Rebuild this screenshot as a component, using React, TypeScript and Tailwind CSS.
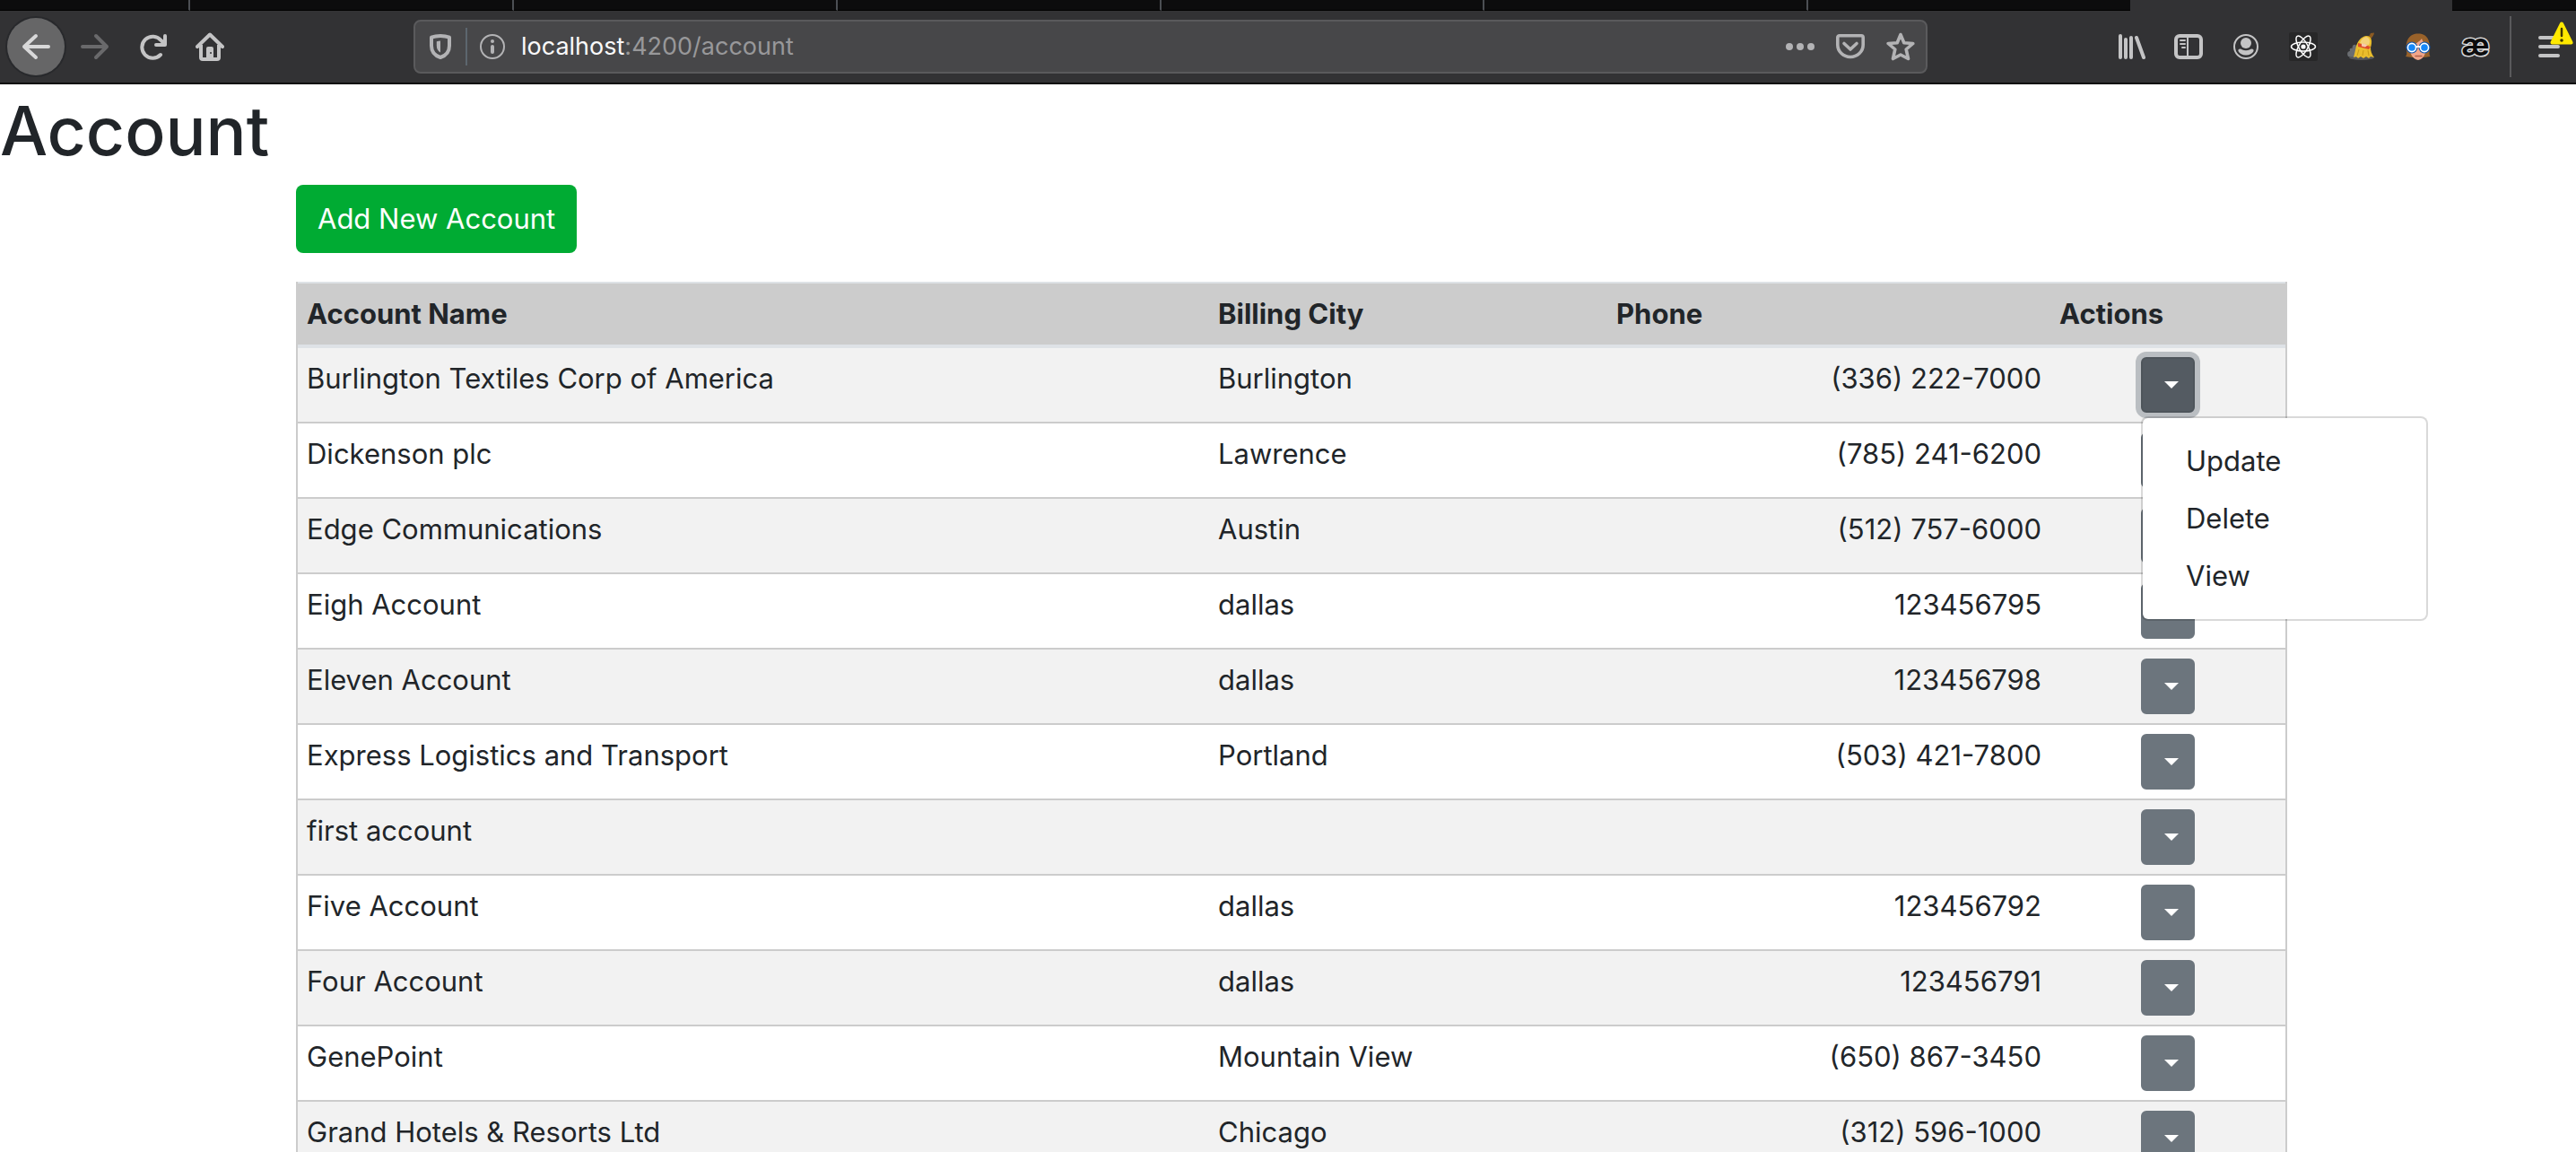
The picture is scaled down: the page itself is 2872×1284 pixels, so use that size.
import type { ReactNode } from "react";

type Account = { name: string; city: string; phone: string };

const accounts: Account[] = [
  { name: "Burlington Textiles Corp of America", city: "Burlington", phone: "(336) 222-7000" },
  { name: "Dickenson plc", city: "Lawrence", phone: "(785) 241-6200" },
  { name: "Edge Communications", city: "Austin", phone: "(512) 757-6000" },
  { name: "Eigh Account", city: "dallas", phone: "123456795" },
  { name: "Eleven Account", city: "dallas", phone: "123456798" },
  { name: "Express Logistics and Transport", city: "Portland", phone: "(503) 421-7800" },
  { name: "first account", city: "", phone: "" },
  { name: "Five Account", city: "dallas", phone: "123456792" },
  { name: "Four Account", city: "dallas", phone: "123456791" },
  { name: "GenePoint", city: "Mountain View", phone: "(650) 867-3450" },
  { name: "Grand Hotels & Resorts Ltd", city: "Chicago", phone: "(312) 596-1000" },
];

function Icon({ children, className = "" }: { children: ReactNode; className?: string }) {
  return (
    <svg viewBox="0 0 32 32" className={"size-8 shrink-0 " + className} fill="none" aria-hidden="true">
      {children}
    </svg>
  );
}

function ToolButton({ label, children }: { label: string; children: ReactNode }) {
  return (
    <button type="button" aria-label={label} className="flex h-16 w-16 shrink-0 items-center justify-center text-[#c4c4c5]">
      {children}
    </button>
  );
}

function TabStrip() {
  return (
    <div className="flex h-3 bg-[#323234]">
      <div className="w-[212px] shrink-0 border-r-2 border-b border-r-[#4c4f54] border-b-black bg-[#0c0c0d]" />
      <div className="flex-1 border-r-2 border-b border-r-[#4c4f54] border-b-black bg-[#0c0c0d]" />
      <div className="flex-1 border-r-2 border-b border-r-[#4c4f54] border-b-black bg-[#0c0c0d]" />
      <div className="flex-1 border-r-2 border-b border-r-[#4c4f54] border-b-black bg-[#0c0c0d]" />
      <div className="flex-1 border-r-2 border-b border-r-[#4c4f54] border-b-black bg-[#0c0c0d]" />
      <div className="flex-1 border-r-2 border-b border-r-[#4c4f54] border-b-black bg-[#0c0c0d]" />
      <div className="flex-1 border-b border-black bg-[#0c0c0d]" />
      <div className="flex-1" />
      <div className="w-[138px] shrink-0 border-b border-black bg-[#0c0c0d]" />
    </div>
  );
}

function UrlBar() {
  return (
    <div className="flex h-[60px] min-w-0 flex-1 items-center rounded-lg border-2 border-[#5a5a5c] bg-[#474749] text-[#b3b3b5]">
      <Icon className="ml-3">
        <path d="M16 4c4 0 7.500.7 10 1.700V15c0 6.500-3.800 11-10 13-6.200-2-10-6.500-10-13V5.700C8.500 4.700 12 4 16 4z" stroke="currentColor" strokeWidth="4" strokeLinejoin="round" />
        <path d="M16 9.500c-1.600 0-3 .3-4.200.7V15c0 3.800 1.600 6 4.200 7.500z" fill="currentColor" />
      </Icon>
      <div className="ml-3 h-[42px] w-0.5 bg-[#5c666e]" />
      <Icon className="ml-3">
        <circle cx="16" cy="16" r="13" stroke="currentColor" strokeWidth="2" />
        <circle cx="16" cy="10" r="2" fill="currentColor" />
        <path d="M16 16v6" stroke="currentColor" strokeWidth="4" strokeLinecap="round" />
      </Icon>
      <div className="ml-4 min-w-0 flex-1 truncate text-[27px] text-[#98989a]">
        <span className="text-[#f9f9fa]">localhost</span>:4200/account
      </div>
      <button type="button" aria-label="Page actions" className="mr-6">
        <Icon>
          <circle cx="4" cy="16" r="4" fill="currentColor" />
          <circle cx="16" cy="16" r="4" fill="currentColor" />
          <circle cx="28" cy="16" r="4" fill="currentColor" />
        </Icon>
      </button>
      <button type="button" aria-label="Save to Pocket" className="mr-6">
        <Icon>
          <path d="M3.800 3.800h24.400a2 2 0 0 1 2 2V14a14.200 13.500 0 0 1-28.400 0V5.800a2 2 0 0 1 2-2z" stroke="currentColor" strokeWidth="3.600" strokeLinejoin="round" />
          <path d="M9 12.500l7 6.500 7-6.500" stroke="currentColor" strokeWidth="3.600" strokeLinecap="round" strokeLinejoin="round" />
        </Icon>
      </button>
      <button type="button" aria-label="Bookmark this page" className="mr-3">
        <Icon>
          <path d="M16 2.500l3.800 9.200 10 .8-7.600 6.500 2.300 10.500L16 25l-8.500 4.500L9.800 19 2.200 12.500l10-.8z" stroke="currentColor" strokeWidth="3.600" strokeLinejoin="round" />
        </Icon>
      </button>
    </div>
  );
}

function BrowserBar() {
  return (
    <header className="text-[#c4c4c5]">
      <TabStrip />
      <div className="flex h-[82px] items-center border-b-2 border-[#0c0c0d] bg-[#323234]">
        <button type="button" aria-label="Back" className="ml-2 flex size-16 shrink-0 items-center justify-center rounded-full bg-[#666667] text-[#d8d8d9] ring-2 ring-[#28292c]">
          <Icon>
            <path d="M30 16H3M16 4L3 16l13 12" stroke="currentColor" strokeWidth="4" strokeLinecap="round" strokeLinejoin="round" />
          </Icon>
        </button>
        <button type="button" aria-label="Forward" className="ml-[18px] shrink-0 text-[#69696b]">
          <Icon>
            <path d="M2 16h27M17 4l12 12-12 12" stroke="currentColor" strokeWidth="4" strokeLinecap="round" strokeLinejoin="round" />
          </Icon>
        </button>
        <button type="button" aria-label="Reload" className="ml-8 shrink-0">
          <Icon>
            <path d="M25 25A12 12 0 1 1 25.500 9l4 4" stroke="currentColor" strokeWidth="4" strokeLinecap="round" />
            <path d="M30 4v10H20" stroke="currentColor" strokeWidth="4" strokeLinecap="round" strokeLinejoin="round" />
          </Icon>
        </button>
        <button type="button" aria-label="Home" className="ml-8 shrink-0">
          <Icon>
            <path d="M2 16L16 2.500 30 16" stroke="currentColor" strokeWidth="4" strokeLinecap="round" strokeLinejoin="round" />
            <path d="M6 14v14a2 2 0 0 0 2 2h16a2 2 0 0 0 2-2V14" stroke="currentColor" strokeWidth="4" />
            <path d="M12 30V18a2 2 0 0 1 2-2h4a2 2 0 0 1 2 2v12z" fill="currentColor" />
            <circle cx="17" cy="23" r="1" fill="#323234" />
          </Icon>
        </button>
        <div className="mr-[195px] ml-[211px] flex min-w-0 flex-1">
          <UrlBar />
        </div>
        <ToolButton label="Library">
          <Icon>
            <path d="M4 4v24M10 8v20M16 6v22M22 6l8 22" stroke="currentColor" strokeWidth="4" strokeLinecap="round" />
          </Icon>
        </ToolButton>
        <ToolButton label="Sidebars">
          <Icon>
            <rect x="2" y="4" width="28" height="24" rx="4" stroke="currentColor" strokeWidth="4" />
            <path d="M15 4v24" stroke="currentColor" strokeWidth="2" />
            <path d="M7 9h5M7 13h5M9 17h3" stroke="currentColor" strokeWidth="2" strokeLinecap="round" />
          </Icon>
        </ToolButton>
        <ToolButton label="Firefox account">
          <Icon>
            <circle cx="16" cy="16" r="13" stroke="currentColor" strokeWidth="2" />
            <circle cx="16" cy="12" r="6" fill="currentColor" />
            <path d="M9.500 18.500c1.500 0 3.200 1.800 6.500 1.800s5-1.800 6.500-1.800c1.800 0 2.500 1.400 1.900 2.800C23 24 20 25.500 16 25.500S9 24 7.600 21.300c-.6-1.400.1-2.800 1.900-2.800z" fill="currentColor" />
          </Icon>
        </ToolButton>
        <ToolButton label="React Developer Tools">
          <Icon>
            <rect width="32" height="32" rx="2" fill="#272728" />
            <g stroke="#fff" strokeWidth="1.500">
              <ellipse cx="16" cy="16" rx="13.500" ry="5" />
              <ellipse cx="16" cy="16" rx="13.500" ry="5" transform="rotate(60 16 16)" />
              <ellipse cx="16" cy="16" rx="13.500" ry="5" transform="rotate(120 16 16)" />
            </g>
            <circle cx="16" cy="16" r="2.600" fill="#fff" />
          </Icon>
        </ToolButton>
        <ToolButton label="Cleaner">
          <Icon>
            <ellipse cx="17" cy="28" rx="14" ry="3" fill="#55575a" />
            <path d="M2 27c-2-4 0-6 2-6-1-3 1-4 2.500-3 0-4 2-5 4-4l3 14z" fill="#6a6d71" />
            <path d="M22 5c2 0 4-1 5-4l4-.5c0 2-2 5-4 7z" fill="#8a5a22" />
            <path d="M22 4c-6 1-9 6-11 11-1 5-2 9-3 13l3-1 2 2 3-2 3 2 3-2 3 2 2-2 4 1c-3-4-4-7-4-11 2-6 2-13-5-13z" fill="#e9bd2c" />
            <path d="M22 5c-4 1-6 4-7 7l10 2c2-4 1-8-3-9z" fill="#f3d27a" />
            <path d="M13 12l14 4-2 3-12-3z" fill="#dd4a2b" />
            <path d="M17 12l7 2-3 2.500-4-1z" fill="#f7c9ad" />
            <path d="M14 19l-2 7M19 20l-1 6M24 20l1 6" stroke="#c99a16" />
          </Icon>
        </ToolButton>
        <ToolButton label="Profile helper">
          <Icon>
            <path d="M2 27c3-3 0-8 1-15C5 4 10 1.500 16 1.500S27 4 28.500 12c.8 7-1 12 1 15l-7 1H9z" fill="#99622a" />
            <path d="M7 15c5-1 11-5 13-8 1 4 4 6 5 8 0 7-2 15-9 16-7-1-10-9-9-16z" fill="#f2a68a" />
            <path d="M13 26.500h7" stroke="#b0604a" strokeWidth="1.500" strokeLinecap="round" />
            <circle cx="9" cy="17" r="6.500" fill="#0a55b0" />
            <circle cx="23" cy="17" r="6.500" fill="#0a55b0" />
            <circle cx="9" cy="17" r="4.600" fill="#1688fa" stroke="#fff" strokeWidth="1.600" />
            <circle cx="23" cy="17" r="4.600" fill="#1688fa" stroke="#fff" strokeWidth="1.600" />
            <path d="M13.500 16.500q2.500-1.500 5 0" stroke="#fff" strokeWidth="1.800" />
          </Icon>
        </ToolButton>
        <ToolButton label="Spelling">
          <svg viewBox="0 0 32 32" className="size-8 shrink-0 overflow-visible" aria-hidden="true">
            <text x="16" y="26" textAnchor="middle" className="font-[Inter] text-[34px] font-bold" fill="#0c0c0d" stroke="#d8d8d8" strokeWidth="3" strokeLinejoin="round" paintOrder="stroke">
              æ
            </text>
          </svg>
        </ToolButton>
        <div className="ml-1.5 h-[68px] w-0.5 shrink-0 bg-[#5a5a5c]" />
        <button type="button" aria-label="Open menu" className="relative mr-3.5 ml-[26px] shrink-0">
          <Icon>
            <path d="M6 6h20M6 16h20M6 26h20" stroke="currentColor" strokeWidth="4" strokeLinecap="round" />
          </Icon>
          <svg viewBox="0 0 26 26" className="absolute -top-3 left-[17px] size-[26px]" aria-hidden="true">
            <path d="M13 2.500L23.500 23.500h-21z" fill="#ffe900" stroke="#ffe900" strokeWidth="4" strokeLinejoin="round" />
            <path d="M13 8v8" stroke="#3e3800" strokeWidth="2.500" strokeLinecap="round" />
            <circle cx="13" cy="21" r="1.800" fill="#3e3800" />
          </svg>
        </button>
      </div>
    </header>
  );
}

function Caret() {
  return <span className="ml-2 block border-x-8 border-t-8 border-x-transparent border-t-white" />;
}

function ActionsMenu() {
  return (
    <div
      role="menu"
      className="absolute top-full left-0 z-10 mt-1 flex w-80 flex-col rounded-lg border-2 border-black/15 bg-white bg-clip-padding py-4 text-left"
    >
      {["Update", "Delete", "View"].map((item) => (
        <a key={item} href="#" role="menuitem" className="px-12 py-2">
          {item}
        </a>
      ))}
    </div>
  );
}

function ActionsCell({ name, open }: { name: string; open: boolean }) {
  return (
    <div className="relative mx-auto w-[60px]">
      <button
        type="button"
        aria-label={"Actions for " + name}
        aria-haspopup="menu"
        aria-expanded={open}
        className={
          "flex h-[62px] w-[60px] items-center justify-center rounded-md border-2 " +
          (open ? "border-[#4e555b] bg-[#545b62] ring-6 ring-[#828a91]/50" : "border-[#6c757d] bg-[#6c757d]")
        }
      >
        <Caret />
      </button>
      {open && <ActionsMenu />}
    </div>
  );
}

export default function App() {
  return (
    <div className="h-screen overflow-hidden bg-white font-[Inter,sans-serif] text-[31px] leading-12 text-[#212529]">
      <BrowserBar />
      <main>
        <h1 className="mb-3 pt-1 text-[75px] leading-24 font-medium">Account</h1>
        <div className="pl-2">
          <div className="mx-auto max-w-[2220px]">
            <button type="button" className="mb-8 block h-[76px] rounded-lg bg-[#00ab33] px-6 text-white">
              Add New Account
            </button>
            <table className="w-full table-fixed border-separate border-spacing-0 border-x-2 border-[#ccc]">
              <thead className="bg-[#ccc] text-left">
                <tr>
                  <th scope="col" className="border-t-2 border-b-4 border-[#dee2e6] p-2.5 font-bold">Account Name</th>
                  <th scope="col" className="w-[444px] border-t-2 border-b-4 border-[#dee2e6] p-2.5 font-bold">Billing City</th>
                  <th scope="col" className="w-[494px] border-t-2 border-b-4 border-[#dee2e6] p-2.5 font-bold">Phone</th>
                  <th scope="col" className="w-[262px] border-t-2 border-b-4 border-[#dee2e6] p-2.5 font-bold">Actions</th>
                </tr>
              </thead>
              <tbody>
                {accounts.map((account, index) => (
                  <tr key={account.name} className="align-top odd:bg-[#f2f2f2]">
                    <td className="border-b-2 border-[#ccc] p-2.5">{account.name}</td>
                    <td className="border-b-2 border-[#ccc] p-2.5">{account.city}</td>
                    <td className="border-b-2 border-[#ccc] p-2.5 text-right">{account.phone}</td>
                    <td className="border-b-2 border-[#ccc] p-2.5">
                      <ActionsCell name={account.name} open={index === 0} />
                    </td>
                  </tr>
                ))}
              </tbody>
            </table>
          </div>
        </div>
      </main>
    </div>
  );
}
